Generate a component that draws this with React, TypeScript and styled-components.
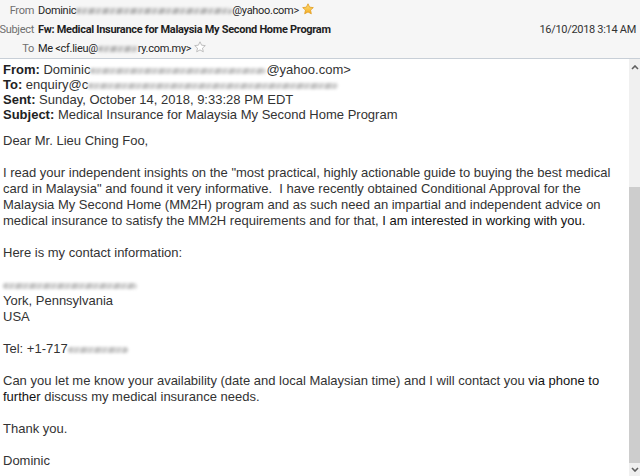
import styled, { createGlobalStyle } from "styled-components";

const GlobalStyle = createGlobalStyle`
  html, body {
    margin: 0;
    padding: 0;
    overflow: hidden;
    background: #ffffff;
  }
`;

const STAR = "6,0.8 7.6,4.2 11.3,4.6 8.5,7.1 9.3,10.8 6,8.9 2.7,10.8 3.5,7.1 0.7,4.6 4.4,4.2";

const Star: React.FC<{ filled?: boolean }> = ({ filled }) => (
  <StarSvg width="12" height="12" viewBox="0 0 12 12">
    <defs>
      <linearGradient id="gold" x1="0" y1="0" x2="0" y2="1">
        <stop offset="0" stopColor="#ffe27a" />
        <stop offset="1" stopColor="#f4aa1e" />
      </linearGradient>
    </defs>
    <polygon
      points={STAR}
      fill={filled ? "url(#gold)" : "#ffffff"}
      stroke={filled ? "#e3a12a" : "#b8b8b8"}
      strokeWidth="0.9"
      strokeLinejoin="round"
    />
  </StarSvg>
);

const Chevron: React.FC<{ down?: boolean }> = ({ down }) => (
  <svg width="8" height="5" viewBox="0 0 8 5">
    <polyline
      points={down ? "1,1 4,4 7,1" : "1,4 4,1 7,4"}
      fill="none"
      stroke="#5f5f5f"
      strokeWidth="1.6"
    />
  </svg>
);

const App = () => {
  return (
    <>
      <GlobalStyle />
      <Window>
        <Header>
          <HeaderRow>
            <Label>From</Label>
            <Value>
              Dominic
              <Smudge $w={156} />
              @yahoo.com&gt;
              <Star filled />
            </Value>
          </HeaderRow>
          <HeaderRow>
            <Label>Subject</Label>
            <Value $bold>Fw: Medical Insurance for Malaysia My Second Home Program</Value>
            <DateText>16/10/2018 3:14 AM</DateText>
          </HeaderRow>
          <HeaderRow>
            <Label>To</Label>
            <Value>
              Me &lt;cf.lieu@
              <Smudge $w={40} />
              ry.com.my&gt;
              <Star />
            </Value>
          </HeaderRow>
        </Header>

        <Main>
          <Content>
            <Quote>
              <div>
                <b>From:</b> Dominic
                <Smudge $w={176} $tone="light" />
                @yahoo.com&gt;
              </div>
              <div>
                <b>To:</b> enquiry@c
                <Smudge $w={250} $tone="light" />
              </div>
              <div>
                <b>Sent:</b> Sunday, October 14, 2018, 9:33:28 PM EDT
              </div>
              <div>
                <b>Subject:</b> Medical Insurance for Malaysia My Second Home Program
              </div>
            </Quote>

            <Para>Dear Mr. Lieu Ching Foo,</Para>
            <Para>
              I read your independent insights on the "most practical, highly actionable guide to buying the best medical
              <br />
              card in Malaysia" and found it very informative.&nbsp; I have recently obtained Conditional Approval for the
              <br />
              Malaysia My Second Home (MM2H) program and as such need an impartial and independent advice on
              <br />
              medical insurance to satisfy the MM2H requirements and for that, <Dark>I am interested in working with you.</Dark>
            </Para>
            <Para>Here is my contact information:</Para>
            <Para>
              <Smudge $w={134} $tone="light" />
              <br />
              York, Pennsylvania
              <br />
              USA
            </Para>
            <Para>
              Tel: +1-717
              <Smudge $w={60} $tone="light" />
            </Para>
            <Para>
              Can you let me know your availability (date and local Malaysian time) and I will contact you{" "}
              <Dark>via phone to</Dark>
              <br />
              <Dark>further</Dark> discuss my medical insurance needs.
            </Para>
            <Para>Thank you.</Para>
            <Para>Dominic</Para>
          </Content>

          <ScrollBar>
            <ArrowButton $h={17}>
              <Chevron />
            </ArrowButton>
            <Track>
              <Thumb />
            </Track>
            <ArrowButton $h={13}>
              <Chevron down />
            </ArrowButton>
          </ScrollBar>
        </Main>
      </Window>
    </>
  );
};

export default App;

const Window = styled.div`
  width: 640px;
  height: 476px;
  display: flex;
  flex-direction: column;
  overflow: hidden;
`;

const Header = styled.header`
  height: 59px;
  box-sizing: border-box;
  padding-top: 1px;
  padding-right: 4px;
  background: #f6f6f6;
  border-bottom: 1px solid #c8cfd7;
  font-family: Roboto, "Liberation Sans", sans-serif;
  font-size: 11px;
  letter-spacing: -0.3px;
  color: #1f1f1f;
`;

const HeaderRow = styled.div`
  display: flex;
  align-items: center;
  height: 19px;
  white-space: nowrap;
`;

const Label = styled.span`
  width: 34px;
  margin-right: 4px;
  flex-shrink: 0;
  display: flex;
  justify-content: flex-end;
  color: #6f6f6f;
`;

const Value = styled.span<{ $bold?: boolean }>`
  display: flex;
  align-items: center;
  font-weight: ${(p) => (p.$bold ? 700 : 400)};
`;

const DateText = styled.span`
  margin-left: auto;
  color: #333333;
`;

const StarSvg = styled.svg`
  margin-left: 3px;
  margin-top: -3px;
`;

const Smudge = styled.span<{ $w: number; $tone?: "light" }>`
  display: inline-block;
  width: ${(p) => p.$w}px;
  height: 6px;
  vertical-align: middle;
  border-radius: 3px;
  background: repeating-linear-gradient(
    112deg,
    ${(p) => (p.$tone === "light" ? "#c2c2c2" : "#b4b4b4")} 0 5px,
    #dcdcdc 5px 7px,
    ${(p) => (p.$tone === "light" ? "#cfcfcf" : "#c4c4c4")} 7px 11px,
    #e6e6e6 11px 13px
  );
  filter: blur(1.6px);
`;

const Main = styled.div`
  flex: 1;
  min-height: 0;
  display: flex;
  background: #ffffff;
`;

const Content = styled.div`
  flex: 1;
  overflow: hidden;
  padding: 3px 0 0 3px;
  font-family: "Liberation Sans", Arial, sans-serif;
  font-size: 13px;
  color: #333333;
  white-space: nowrap;
`;

const Quote = styled.div`
  line-height: 15px;
  margin-bottom: 11px;

  b {
    font-weight: 700;
    color: #222222;
  }
`;

const Para = styled.p`
  margin: 0 0 16px;
  line-height: 16px;
`;

const Dark = styled.span`
  color: #111111;
`;

const ScrollBar = styled.div`
  width: 11px;
  display: flex;
  flex-direction: column;
  background: #f0f0f0;
`;

const ArrowButton = styled.div<{ $h: number }>`
  height: ${(p) => p.$h}px;
  display: flex;
  align-items: center;
  justify-content: center;
  flex-shrink: 0;
`;

const Track = styled.div`
  flex: 1;
  display: flex;
  flex-direction: column;
  justify-content: flex-end;
`;

const Thumb = styled.div`
  height: 276px;
  background: #cdcdcd;
`;
